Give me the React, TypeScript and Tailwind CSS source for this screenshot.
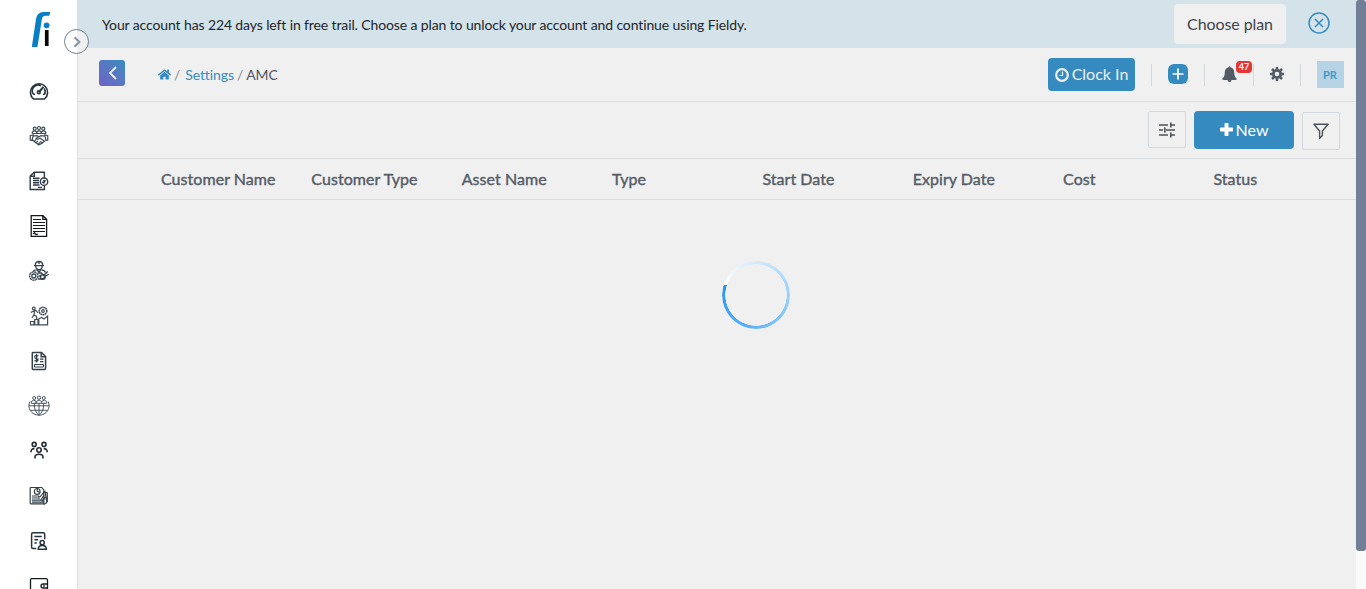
import type { ReactNode } from "react";
import { FaHome } from "react-icons/fa";

const sidebarIcons: { name: string; color: string; width: number; art: ReactNode }[] = [
  {
    name: "Dashboard", color: "#263540", width: 1.6,
    art: (
      <>
        <path d="M6.5 20A8.6 8.6 0 1 1 17.5 20Z" strokeLinejoin="round" />
        <path d="M6.2 15.2A6 6 0 0 1 14 6.7M17.2 9.5A6 6 0 0 1 17.8 15.2M6.2 15.2H8M16 15.2H17.8" />
        <path d="M12 13L16.5 7.8" strokeWidth="2" />
        <circle cx="11.8" cy="13.2" r="1.4" />
      </>
    ),
  },
  {
    name: "Customers", color: "#3d4952", width: 1.2,
    art: (
      <>
        <circle cx="7.7" cy="4.7" r="1.5" /><circle cx="12" cy="4" r="1.5" /><circle cx="16.3" cy="4.7" r="1.5" />
        <path d="M5.3 9.5V8Q7.7 5.8 9.6 8V9.5M9.8 8.5Q12 4.8 14.2 8.5V9.5H5.3M14.4 8Q16.5 5.8 18.7 8V9.5H14" />
        <path d="M3.3 11.5L6.4 11L5 16.5L3.2 16ZM20.7 11.5L17.6 11L19 16.5L20.8 16ZM6.4 12L10 11.7L12 12.7L14 11.7L17.6 12M12 12.5L9 14.7Q10.4 16 13 14.2L18 17.4M5.5 16L11.5 20.8L13 20.4L17.8 16.9M7 17.4L8.8 15.8M9 18.9L11 16.9M11 20.4L13 18.4M13 17.4L16 19.2" />
      </>
    ),
  },
  {
    name: "Jobs", color: "#303a45", width: 1.4,
    art: (
      <>
        <path d="M17.4 9V3.2H7.2L3.2 7V20.5H17.4V17M7.4 3.2V7.2H3.2" />
        <path d="M6 9.2H12.5M6 11.5H12M6 13.8H12M6 16H12.5M11 18.4H15" />
        <circle cx="17" cy="12.7" r="3.7" /><path d="M15 12.7L16.8 14L18.4 11.2M16.8 11V12.5" />
      </>
    ),
  },
  {
    name: "Contracts", color: "#15191d", width: 1.3,
    art: (
      <>
        <path d="M4.2 1.7H16L19.6 5.2V22.3H4.2ZM15.8 1.7V5.3H19.6" />
        <path d="M6 5.5H14M6 8.5H18M6 11.5H18M6 14.5H18M6 17.5H18" strokeWidth="1" />
        <path d="M6 20Q7.5 17.8 8 19.5T11 20" />
      </>
    ),
  },
  {
    name: "Technicians", color: "#34424d", width: 1.3,
    art: (
      <>
        <path d="M8.2 6.5Q8.3 2.5 12 2.5T15.8 6.5M7 6.7H17M12 2.3V5M8.8 7.3Q9 10.7 12 10.7T15.2 7.3M6 12.5Q7 10.8 9.5 10.8M14.5 10.8Q18 11 18.5 13.5M10 11L12 13L14 11" />
        <circle cx="6.8" cy="17" r="4.2" strokeDasharray="2.4 .4" /><circle cx="6.8" cy="17" r="2" />
        <path d="M11 14H14.5L16.5 16.5L20.8 12.5M11 20H15Q17.2 19.5 18 17.4L21.8 15.2M12 17H14.5" />
        <circle cx="15.8" cy="18" r="2.4" />
      </>
    ),
  },
  {
    name: "Productivity", color: "#414d56", width: 1.2,
    art: (
      <>
        <circle cx="6.8" cy="4.5" r="1.4" />
        <path d="M5.6 7.4L9 6.5L11 9M7.5 7L7 11L9.5 12.4L9.8 15M6.8 11L5 14M4 8.5L5.5 7.4" />
        <circle cx="16" cy="7" r="3.8" strokeDasharray="1.8 .4" strokeWidth="1.6" /><circle cx="16" cy="7" r="1.3" />
        <path d="M3.5 17.5H7V20.8H3.5ZM7.8 15.5H11V20.8H7.8ZM11.8 14.7L14.7 13.5L17 15L20.6 12V20.8H11.8Z" />
      </>
    ),
  },
  {
    name: "Invoices", color: "#34404a", width: 1.5,
    art: (
      <>
        <path d="M6 3.5H14.5L18.6 7.5V19Q18.6 20.5 17.5 20.5H6Q5.3 20.5 5.3 19.8V4.2Q5.3 3.5 6 3.5ZM14.2 3.5V7.8H18.5" />
        <path d="M11.5 7Q7.5 5.5 7.8 8T11 10Q11.5 13 7.5 11.6M9.6 5V13.4M13 10.2H16.5M13 12.7H16.5" strokeWidth="1.2" />
        <path d="M7.5 15.5H16.5V18H7.5Z" strokeWidth="1" />
      </>
    ),
  },
  {
    name: "Community", color: "#4b565f", width: 1,
    art: (
      <>
        <circle cx="7.2" cy="4" r="1.5" /><circle cx="12" cy="3.7" r="1.7" /><circle cx="16.8" cy="4" r="1.5" />
        <path d="M4.3 9.3V7.5Q6.8 4.8 9 7.3V9.3M9.3 9.3V7.5Q12 4.5 14.7 7.5V9.3M15 7.3Q17.2 4.8 19.7 7.5V9.3M4.3 9.3H19.7" />
        <path d="M2.8 7.5C-.2 14 4.5 21.2 12 21.2S24.2 14 21.2 7.5M1.6 11.8H22.4M3.5 16.3H20.5M12 9.3V21.2M7.3 9.3Q7 17.5 12 21.2Q17 17.5 16.7 9.3" />
      </>
    ),
  },
  {
    name: "Teams", color: "#252c31", width: 1.6,
    art: (
      <>
        <circle cx="7.2" cy="5.4" r="2" /><circle cx="17" cy="5.4" r="2" /><circle cx="12" cy="11" r="2.2" />
        <path d="M4 13.2Q3.8 9.6 7.5 9.6M20.2 13.2Q20.4 9.6 16.7 9.6M8 19.5V18Q8 15.3 12 15.3T16 18V19.5" />
      </>
    ),
  },
  {
    name: "Reports", color: "#333e47", width: 1.2,
    art: (
      <>
        <path d="M4 3.5H14.8L16.8 6V19.8H4Q3.2 19.8 3.2 19V4.3Q3.2 3.5 4 3.5Z" />
        <circle cx="10.2" cy="7.4" r="2.9" /><path d="M10.2 4.6V7.4L12.8 8.5" />
        <path d="M5 12H12M5 14H11M5 16.2H17M5 18.2H16M13 13L16.5 8.5L18 7.5L19.8 18.5L16.8 20.5M14 16L17 11M15.5 18L18 13M12 15V12M17 7.5L20.3 9V18" />
      </>
    ),
  },
  {
    name: "Directory", color: "#27343f", width: 1.5,
    art: (
      <>
        <path d="M17.7 10.2V5.2Q17.7 3.7 16.2 3.7H6Q4.6 3.7 4.6 5.2V18Q4.6 19.6 6 19.6H9.2" />
        <path d="M7.4 7.5H14.8M7.4 10.8H11.2M7.4 14H9.8" />
        <circle cx="15.2" cy="13.7" r="2.1" /><path d="M11.2 20.2Q11.3 16.6 15.3 16.6T19.4 20.2Z" />
      </>
    ),
  },
  {
    name: "Wallet", color: "#171b1e", width: 1.3,
    art: (
      <>
        <path d="M4.8 4.7H18.8Q20.5 4.7 20.5 6.3V19H3.5V6Q3.5 4.7 4.8 4.7Z" />
        <path d="M20.5 10H16.2Q14 10 14 12T16.2 14H20.5M17 11V13" />
      </>
    ),
  },
];

const columns = ["Customer Name", "Customer Type", "Asset Name", "Type", "Start Date", "Expiry Date", "Cost", "Status"];

function Sidebar() {
  return (
    <aside className="relative h-full w-[78px] shrink-0 border-r border-[#d5e2e8] bg-white">
      <div className="flex h-[68px] justify-center pt-[11px]">
        <svg className="ml-1 h-[38px] w-5" viewBox="0 0 20 38">
          <path d="M.8 36L5 8Q6.2 1 12.5 1H19.2L18.4 4.7H14.5Q11.5 4.7 10.9 8L6.4 36Z" fill="#087fc4" />
          <circle cx="15.6" cy="14.3" r="2.9" fill="#087fc4" />
          <path d="M13.9 19H17.6V35H13.9Z" fill="#080808" />
        </svg>
      </div>
      <nav className="flex flex-col">
        {sidebarIcons.map((icon) => (
          <a key={icon.name} href="#" aria-label={icon.name} className="flex h-[45px] shrink-0 items-center justify-center">
            <svg className="size-6" viewBox="0 0 24 24" fill="none" stroke={icon.color} strokeWidth={icon.width}>
              {icon.art}
            </svg>
          </a>
        ))}
      </nav>
      <button aria-label="Expand menu" className="absolute left-16 top-[29px] z-10 flex size-[25px] items-center justify-center rounded-full border border-[#718096] bg-[linear-gradient(90deg,#fff_52%,#f0f0f0_52%)]">
        <svg className="ml-px size-3" viewBox="0 0 12 12" fill="none" stroke="#8c96a3" strokeWidth="2.2">
          <path d="M3.5 1.2L8.3 6L3.5 10.8" />
        </svg>
      </button>
    </aside>
  );
}

function TrialBanner() {
  return (
    <div className="flex h-12 items-center bg-[#d4e3ea] pl-6 pr-[26px]">
      <p className="grow pt-px text-sm tracking-[-0.118px] text-[#212529]">
        Your account has 224 days left in free trail. Choose a plan to unlock your account and continue using Fieldy.
      </p>
      <button className="h-10 w-28 rounded bg-[#f0f0f0] text-base tracking-[-0.1px] text-[#3f444a]">Choose plan</button>
      <button aria-label="Dismiss" className="ml-[22px]">
        <svg className="mb-0.5 size-[22px]" viewBox="0 0 22 22" fill="none" stroke="#358bc0" strokeWidth="1.5">
          <circle cx="11" cy="11" r="10" />
          <path d="M7 7L15 15M15 7L7 15" />
        </svg>
      </button>
    </div>
  );
}

function TopBar() {
  return (
    <header className="flex h-[54px] items-center border-b border-[#dcdddf] pl-[21px] pr-3">
      <button aria-label="Back" className="mb-[3px] flex size-[26px] items-center justify-center rounded-[3px] bg-linear-to-bl from-[#338bc1] to-[#6d62c4]">
        <svg className="ml-px size-[14px]" viewBox="0 0 14 14" fill="none" stroke="#f0f0f0" strokeWidth="1.8">
          <path d="M10 1L4 7L10 13" />
        </svg>
      </button>
      <div className="ml-[33px] flex grow items-center text-sm tracking-[-0.1px] text-[#50555d]">
        <FaHome className="size-[13px] text-[#358bc0]" />
        <span className="ml-[3px] text-[#858b92]">/</span>
        <a href="#" className="ml-[5px] text-[#358bc0]">Settings</a>
        <span className="ml-[3px] text-[#858b92]">/</span>
        <span className="ml-[3px]">AMC</span>
      </div>
      <button className="mb-px flex h-[33px] w-[87px] items-center justify-center gap-[3px] rounded bg-[#358bc0] text-base text-[#f0f0f0]">
        <svg className="mt-px size-[14px]" viewBox="0 0 14 14" fill="none" stroke="currentColor">
          <circle cx="7" cy="7" r="5.8" strokeWidth="2.2" />
          <path d="M7.5 3.6V7.5H4.5" strokeWidth="1.2" />
        </svg>
        Clock In
      </button>
      <div className="ml-4 h-[22px] w-px bg-[#d5d8dc]" />
      <button aria-label="Add" className="mb-px ml-4 flex size-5 items-center justify-center rounded-md bg-[#358bc0] text-white">
        <svg className="size-3" viewBox="0 0 12 12" stroke="currentColor" strokeWidth="1.7"><path d="M6 .5V11.5M.5 6H11.5" /></svg>
      </button>
      <div className="ml-4 h-[22px] w-px bg-[#d5d8dc]" />
      <button aria-label="Notifications" className="relative ml-[17px] w-[31px] text-[#525b66]">
        <svg className="mb-px h-4 w-[15px]" viewBox="0 0 15 16" fill="currentColor">
          <path d="M6.6 1.2Q7.5-.5 8.4 1.2C11 1.7 12.1 3.8 12.2 6.2C12.3 10 13.2 11.5 14.8 12.8Q14.7 13.9 13.7 13.9H9.5A2 2 0 0 1 5.5 13.9H1.3Q.3 13.9.2 12.8C1.8 11.5 2.7 10 2.8 6.2C2.9 3.8 4 1.7 6.6 1.2Z" />
        </svg>
        <span className="absolute -top-[5px] left-[14px] flex h-3 w-4 items-center justify-center rounded-[4px] bg-[#e73535] text-[9px] font-bold text-white">47</span>
      </button>
      <div className="h-[22px] w-px bg-[#d5d8dc]" />
      <svg className="mb-px ml-4 size-[14px] text-[#525b66]" viewBox="0 0 14 14" fill="none" stroke="currentColor">
        <circle cx="7" cy="7" r="3.7" strokeWidth="2.8" />
        <path d="M7 0V2.5M7 11.5V14M0 7H2.5M11.5 7H14M2 2L4 4M10 10L12 12M12 2L10 4M4 10L2 12" strokeWidth="2.5" />
      </svg>
      <div className="ml-4 h-[22px] w-px bg-[#d5d8dc]" />
      <div className="ml-4 flex size-[27px] items-center justify-center bg-[#b5d3e4] pr-px pt-px text-[11px] font-bold text-[#4399c7]">PR</div>
    </header>
  );
}

function Toolbar() {
  return (
    <div className="flex h-[57px] items-center justify-end gap-2 border-b border-[#dcdddf] pr-4">
      <button aria-label="Columns" className="mb-0.5 flex h-[37px] w-[38px] items-center justify-center rounded-[2px] border border-[#d3d8e0]">
        <svg className="size-[18px]" viewBox="0 0 18 18" fill="none" stroke="#4d535a" strokeWidth="1.6">
          <path d="M1 5H10M13 5H17M12.8 2.5V7.5M1 10H5M8 10H17M6.8 7.5V12.5M1 15H10M13 15H17M12.8 12.5V17.5" />
        </svg>
      </button>
      <button className="mb-px flex h-[38px] w-[100px] items-center justify-center gap-[3px] rounded bg-[#358bc0] text-base text-white">
        <svg className="size-[13px]" viewBox="0 0 13 13" fill="currentColor">
          <path d="M5.3 0H7.7Q8.5 0 8.5.8V4.5H12.2Q13 4.5 13 5.3V7.7Q13 8.5 12.2 8.5H8.5V12.2Q8.5 13 7.7 13H5.3Q4.5 13 4.5 12.2V8.5H.8Q0 8.5 0 7.7V5.3Q0 4.5.8 4.5H4.5V.8Q4.5 0 5.3 0Z" />
        </svg>
        New
      </button>
      <button aria-label="Filter" className="mt-px flex size-[38px] items-center justify-center rounded-[2px] border border-[#d3d8e0]">
        <svg className="size-4" viewBox="0 0 16 16" fill="none" stroke="#4d535a" strokeWidth="1.4" strokeLinejoin="round">
          <path d="M.9 1.2H15.1L9.4 8V12.5L6.6 15.2V8Z" />
        </svg>
      </button>
    </div>
  );
}

export default function App() {
  return (
    <div className="flex h-[589px] w-full overflow-hidden bg-[#f0f0f0] font-[Lato,sans-serif]">
      <Sidebar />
      <div className="flex min-w-0 grow flex-col">
        <TrialBanner />
        <TopBar />
        <Toolbar />
        <div className="flex h-[41px] items-center border-b border-[#dcdddf] pl-[83px] text-base tracking-[0.05px] text-[#555c66] [-webkit-text-stroke:0.4px_#555c66]">
          {columns.map((column) => (
            <div key={column} className="w-[150.35px] shrink-0 whitespace-nowrap">{column}</div>
          ))}
        </div>
        <main className="flex justify-center pt-[61px]">
          <div className="ml-[78px] size-[68px] rounded-full bg-[conic-gradient(from_288deg,#fff,#2196f3)] [mask:radial-gradient(circle,transparent_30.5px,#000_31px)]" />
        </main>
      </div>
      <div className="w-2.5 shrink-0 bg-[#fafafa]">
        <div className="h-[551px] rounded-[3px] bg-[#718096]" />
      </div>
    </div>
  );
}
